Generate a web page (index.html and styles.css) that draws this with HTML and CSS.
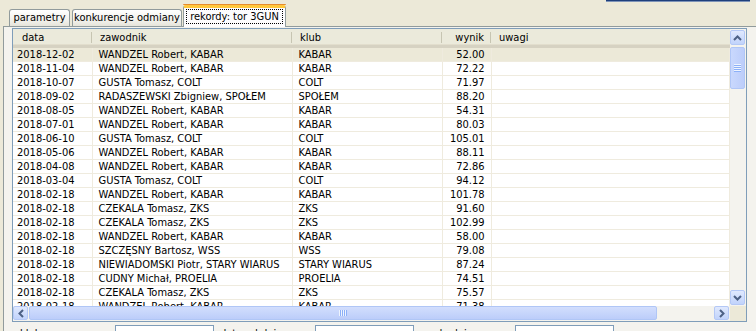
FILE: index.html
```html
<!DOCTYPE html>
<html lang="pl">
<head>
    <meta charset="UTF-8">
    <title>rekordy: tor 3GUN</title>
    <link rel="stylesheet" href="styles.css">
</head>
<body>
    <div class="topline"><span></span></div>

    <div class="tabs">
        <div class="tab tab-1">parametry</div>
        <div class="tab tab-2">konkurencje odmiany</div>
        <div class="tab tab-3 active"><span class="focus">rekordy: tor 3GUN</span></div>
    </div>

    <div class="panel">
        <div class="listview">
            <div class="view">
                <table class="records">
                    <colgroup>
                        <col class="c-data">
                        <col class="c-name">
                        <col class="c-club">
                        <col class="c-score">
                        <col>
                    </colgroup>
                    <thead>
                        <tr>
                            <th class="first">data</th>
                            <th>zawodnik</th>
                            <th>klub</th>
                            <th class="num">wynik</th>
                            <th>uwagi</th>
                        </tr>
                    </thead>
                    <tbody>
                        <tr class="selected"><td class="first">2018-12-02</td><td>WANDZEL Robert, KABAR</td><td>KABAR</td><td class="num">52.00</td><td></td></tr>
                        <tr><td class="first">2018-11-04</td><td>WANDZEL Robert, KABAR</td><td>KABAR</td><td class="num">72.22</td><td></td></tr>
                        <tr><td class="first">2018-10-07</td><td>GUSTA Tomasz, COLT</td><td>COLT</td><td class="num">71.97</td><td></td></tr>
                        <tr><td class="first">2018-09-02</td><td>RADASZEWSKI Zbigniew, SPOŁEM</td><td>SPOŁEM</td><td class="num">88.20</td><td></td></tr>
                        <tr><td class="first">2018-08-05</td><td>WANDZEL Robert, KABAR</td><td>KABAR</td><td class="num">54.31</td><td></td></tr>
                        <tr><td class="first">2018-07-01</td><td>WANDZEL Robert, KABAR</td><td>KABAR</td><td class="num">80.03</td><td></td></tr>
                        <tr><td class="first">2018-06-10</td><td>GUSTA Tomasz, COLT</td><td>COLT</td><td class="num">105.01</td><td></td></tr>
                        <tr><td class="first">2018-05-06</td><td>WANDZEL Robert, KABAR</td><td>KABAR</td><td class="num">88.11</td><td></td></tr>
                        <tr><td class="first">2018-04-08</td><td>WANDZEL Robert, KABAR</td><td>KABAR</td><td class="num">72.86</td><td></td></tr>
                        <tr><td class="first">2018-03-04</td><td>GUSTA Tomasz, COLT</td><td>COLT</td><td class="num">94.12</td><td></td></tr>
                        <tr><td class="first">2018-02-18</td><td>WANDZEL Robert, KABAR</td><td>KABAR</td><td class="num">101.78</td><td></td></tr>
                        <tr><td class="first">2018-02-18</td><td>CZEKALA Tomasz, ZKS</td><td>ZKS</td><td class="num">91.60</td><td></td></tr>
                        <tr><td class="first">2018-02-18</td><td>CZEKALA Tomasz, ZKS</td><td>ZKS</td><td class="num">102.99</td><td></td></tr>
                        <tr><td class="first">2018-02-18</td><td>WANDZEL Robert, KABAR</td><td>KABAR</td><td class="num">58.00</td><td></td></tr>
                        <tr><td class="first">2018-02-18</td><td>SZCZĘSNY Bartosz, WSS</td><td>WSS</td><td class="num">79.08</td><td></td></tr>
                        <tr><td class="first">2018-02-18</td><td>NIEWIADOMSKI Piotr, STARY WIARUS</td><td>STARY WIARUS</td><td class="num">87.24</td><td></td></tr>
                        <tr><td class="first">2018-02-18</td><td>CUDNY Michał, PROELIA</td><td>PROELIA</td><td class="num">74.51</td><td></td></tr>
                        <tr><td class="first">2018-02-18</td><td>CZEKALA Tomasz, ZKS</td><td>ZKS</td><td class="num">75.57</td><td></td></tr>
                        <tr><td class="first">2018-02-18</td><td>WANDZEL Robert, KABAR</td><td>KABAR</td><td class="num">71.38</td><td></td></tr>
                    </tbody>
                </table>
            </div>

            <div class="vscroll">
                <div class="sb-btn">
                    <svg width="9" height="6" viewBox="0 0 9 6"><path d="M1 5 L4.5 1.5 L8 5" fill="none" stroke="#4d6185" stroke-width="2"/></svg>
                </div>
                <div class="thumb vthumb"></div>
                <div class="spacer"></div>
                <div class="sb-btn">
                    <svg width="9" height="6" viewBox="0 0 9 6"><path d="M1 1 L4.5 4.5 L8 1" fill="none" stroke="#4d6185" stroke-width="2"/></svg>
                </div>
            </div>

            <div class="hscroll">
                <div class="sb-btn">
                    <svg width="6" height="9" viewBox="0 0 6 9"><path d="M5 1 L1.5 4.5 L5 8" fill="none" stroke="#4d6185" stroke-width="2"/></svg>
                </div>
                <div class="thumb hthumb"></div>
                <div class="spacer"></div>
                <div class="sb-btn">
                    <svg width="6" height="9" viewBox="0 0 6 9"><path d="M1 1 L4.5 4.5 L1 8" fill="none" stroke="#4d6185" stroke-width="2"/></svg>
                </div>
            </div>

            <div class="corner"></div>
        </div>

        <div class="filters">
            <label class="lbl lbl-1">klub:</label>
            <div class="field"></div>
            <label class="lbl lbl-2">data od dnia:</label>
            <div class="field"></div>
            <label class="lbl lbl-3">do dnia:</label>
            <div class="field"></div>
        </div>
    </div>
</body>
</html>
```

FILE: styles.css
```css
body {
    margin: 0;
    width: 756px;
    height: 331px;
    overflow: hidden;
    background: #ece9d8;
    font-family: "DejaVu Sans Condensed", "DejaVu Sans", sans-serif;
    font-stretch: condensed;
    font-size: 11px;
    color: #000;
}

/* strip of the box above the tabs */
.topline { height: 2px; display: flex; justify-content: flex-end; padding-right: 6px; }
.topline span { width: 144px; height: 1px; background: #1e3f7c; border-bottom: 1px solid #7d93b8; }

/* tabs */
.tabs {
    display: flex;
    align-items: flex-end;
    height: 24px;
    padding-left: 9px;
}
.tab {
    box-sizing: border-box;
    height: 17px;
    border: 1px solid #919b9c;
    border-bottom: none;
    border-radius: 3px 3px 0 0;
    background: linear-gradient(#ffffff, #f0efe9 70%, #e6e4da);
    text-align: center;
    line-height: 15px;
    white-space: nowrap;
}
.tab-1 { width: 61px; margin-right: 2px; }
.tab-2 { width: 110px; margin-right: 1px; }
.tab-3 { width: 103px; }
.tab.active {
    position: relative;
    z-index: 1;
    height: 22px;
    margin-bottom: -1px;
    border-top: 3px solid #ffc83c;
    background: #fcfcfe;
    padding-top: 2px;
    line-height: 13px;
}
.tab.active::before {
    content: "";
    position: absolute;
    left: -1px;
    right: -1px;
    top: -4px;
    height: 1px;
    background: #e68b2c;
    border-radius: 3px 3px 0 0;
}
.focus {
    display: inline-block;
    padding: 0 3px;
    outline: 1px dotted #000;
    outline-offset: 0;
}

/* tab page */
.panel {
    margin-left: 3px;
    width: 780px;
    border: 1px solid #919b9c;
    background: #f4f3ee;
    padding: 1px 0 0 8px;
    height: 330px;
}

.listview {
    box-sizing: border-box;
    width: 735px;
    height: 294px;
    border: 1px solid #7f9db9;
    background: #fff;
    display: grid;
    grid-template-columns: 717px 16px;
    grid-template-rows: 277px 15px;
}
.view { overflow: hidden; }

.records {
    border-collapse: collapse;
    table-layout: fixed;
    width: 717px;
}
.c-data { width: 79px; }
.c-name { width: 200px; }
.c-club { width: 150px; }
.c-score { width: 49px; }

.records th {
    height: 16px;
    padding: 0 0 0 8px;
    text-align: left;
    font-weight: normal;
    background: #ebeadb;
    border-bottom: 3px solid #d6d2c2;
    box-shadow: inset 0 -1px 0 #e2decd;
    position: relative;
    white-space: nowrap;
}
.records th::after {
    content: "";
    position: absolute;
    right: 0;
    top: 3px;
    bottom: 2px;
    width: 1px;
    background: #c7c5b2;
    box-shadow: 1px 0 0 #fff;
}
.records th:last-child::after { display: none; }
.records th.first { padding-left: 9px; }
.records th.num { text-align: right; padding-right: 7px; }

.records td {
    height: 13px;
    padding: 0 0 0 6px;
    line-height: 13px;
    border-bottom: 1px solid #efebde;
    border-right: 1px solid #efebde;
    white-space: nowrap;
    overflow: hidden;
}
.records td.first { padding-left: 4px; }
.records td.num { text-align: right; padding-right: 6px; }
.records tr.selected td { background: #ece9d8; }

/* scrollbars */
.vscroll {
    grid-column: 2;
    grid-row: 1;
    background: #f4f3ee;
    display: flex;
    flex-direction: column;
    padding: 1px 1px 1px 0;
}
.hscroll {
    grid-column: 1;
    grid-row: 2;
    background: #f4f3ee;
    display: flex;
    padding: 0 1px 0 0;
}
.corner { grid-column: 2; grid-row: 2; background: #ece9d8; }
.spacer { flex: 1; }

.sb-btn {
    box-sizing: border-box;
    width: 15px;
    height: 15px;
    border: 1px solid #b4c8f6;
    border-radius: 2px;
    background: linear-gradient(#e0e9fe, #c1d3fb);
    display: flex;
    align-items: center;
    justify-content: center;
}
.hscroll .sb-btn { height: 14px; }

.thumb {
    box-sizing: border-box;
    border: 1px solid #b0c6f6;
    border-radius: 2px;
    position: relative;
}
.vthumb { height: 42px; margin-top: 2px; background: linear-gradient(90deg, #c9d8fd, #bccdfa); }
.hthumb { width: 628px; margin-left: 1px; height: 14px; background: linear-gradient(#d2defd, #bccdfa); }

.thumb::after {
    content: "";
    position: absolute;
    left: 50%;
    top: 50%;
}
.vthumb::after {
    width: 7px;
    height: 8px;
    margin: -4px 0 0 -4px;
    background: repeating-linear-gradient(#eef4fe 0 1px, #8cb0f8 1px 2px);
}
.hthumb::after {
    width: 8px;
    height: 6px;
    margin: -3px 0 0 -4px;
    background: repeating-linear-gradient(90deg, #eef4fe 0 1px, #8cb0f8 1px 2px);
}

/* filters below the list */
.filters {
    display: flex;
    align-items: flex-start;
    margin-top: 3px;
}
.lbl { box-sizing: border-box; padding: 2px 0 0 8px; line-height: 13px; }
.lbl-1 { width: 103px; }
.lbl-2 { width: 101px; padding-left: 6px; }
.lbl-3 { width: 101px; padding-left: 22px; }
.field {
    box-sizing: border-box;
    width: 99px;
    height: 20px;
    border: 1px solid #7f9db9;
    background: #fff;
}
```
